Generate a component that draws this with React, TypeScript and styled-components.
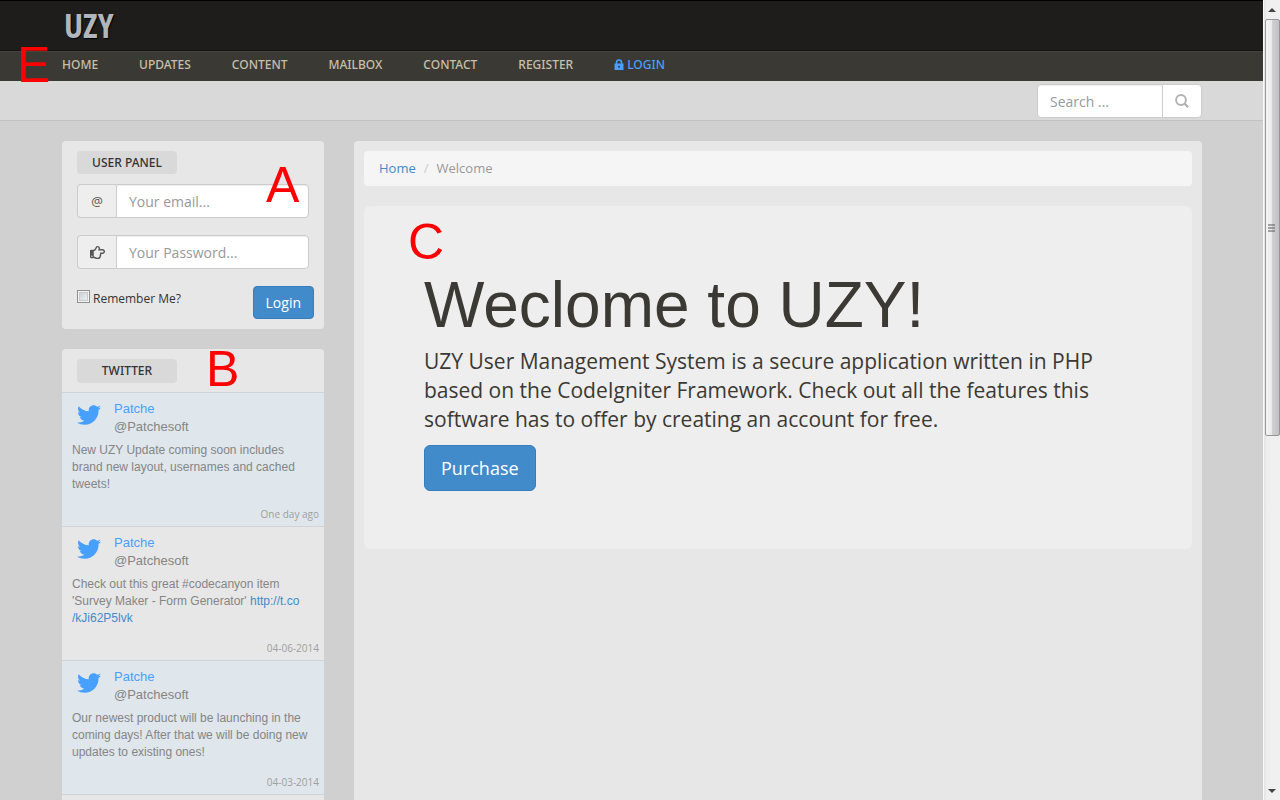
import React from 'react';
import styled, { createGlobalStyle } from 'styled-components';
import { FaRegHandPointRight, FaTwitter } from 'react-icons/fa';

const sans = `"Open Sans", "Noto Sans", sans-serif`;
const medium = `"Noto Sans", "Open Sans", sans-serif`;
const arial = `"Liberation Sans", Arial, sans-serif`;

const GlobalStyle = createGlobalStyle`
  *, *::before, *::after { box-sizing: border-box; }
  body {
    margin: 0;
    background: #d0d0d0;
    color: #333333;
    font-family: ${sans};
    font-size: 13px;
    line-height: 18px;
  }
  a { color: #428bca; text-decoration: none; }
  input, button { font-family: inherit; }
`;

const Window = styled.div`
  position: relative;
  display: flex;
  height: 100vh;
  overflow: hidden;
`;

const Page = styled.div`
  flex: 1;
  min-width: 0;
  height: 100%;
  display: flex;
  flex-direction: column;
`;

const Container = styled.div`
  width: 100%;
  max-width: 1140px;
  margin: 0 auto;
`;

const Header = styled.header`
  flex: none;
  height: 51px;
  background: #1e1d1b;
  border-top: 1px solid #000000;
  border-bottom: 1px solid #151412;
`;

const Logo = styled.a`
  display: inline-block;
  padding-left: 2px;
  color: #b0b6bc;
  font-family: "Open Sans Condensed", "Roboto Condensed", "Liberation Sans Narrow", "DejaVu Sans Condensed", sans-serif;
  font-size: 34px;
  font-weight: 300;
  line-height: 48px;
  text-shadow: 1px 1px 1px #000000;
`;

const NavBar = styled.nav`
  flex: none;
  height: 30px;
  background: #3b3933;
  border-top: 1px solid #45433c;
`;

const NavList = styled.ul`
  display: flex;
  gap: 41px;
  margin: 0;
  padding: 0;
  list-style: none;
`;

const NavLink = styled.a<{ $accent?: boolean }>`
  display: flex;
  align-items: center;
  gap: 3px;
  color: ${(p) => (p.$accent ? '#479fff' : '#c6c0ab')};
  font-family: ${medium};
  font-size: 12px;
  font-weight: 500;
  line-height: 26px;
`;

const SearchStrip = styled.div`
  flex: none;
  height: 40px;
  padding-top: 3px;
  background: #d9d9d9;
  border-bottom: 1px solid #c1c1c1;
`;

const SearchForm = styled.form`
  display: flex;
  width: 165px;
  margin-left: auto;
`;

const TextInput = styled.input`
  flex: 1;
  min-width: 0;
  height: 34px;
  padding: 6px 12px;
  background: #ffffff;
  border: 1px solid #cccccc;
  border-radius: 4px;
  box-shadow: inset 0 1px 1px rgba(0, 0, 0, 0.075);
  color: #555555;
  font-size: 14px;
  line-height: 20px;
  &::placeholder { color: #999999; opacity: 1; }
`;

const SearchInput = styled(TextInput)`
  border-radius: 4px 0 0 4px;
`;

const SearchButton = styled.button`
  display: flex;
  align-items: center;
  justify-content: center;
  width: 40px;
  height: 34px;
  margin-left: -1px;
  padding: 0;
  background: #ffffff;
  border: 1px solid #cccccc;
  border-radius: 0 4px 4px 0;
`;

const Columns = styled(Container)`
  flex: 1;
  min-height: 0;
  display: grid;
  grid-template-columns: minmax(0, 262fr) minmax(0, 848fr);
  gap: 30px;
  margin-top: 20px;
`;

const Sidebar = styled.aside`
  display: flex;
  flex-direction: column;
  gap: 20px;
`;

const Panel = styled.section`
  background: #e7e7e7;
  border-radius: 4px;
`;

const UserPanel = styled(Panel)`
  padding: 10px 15px;
`;

const TwitterPanel = styled(Panel)`
  padding-top: 10px;
`;

const PanelTitle = styled.h2<{ $inset?: boolean }>`
  width: 100px;
  margin: ${(p) => (p.$inset ? '0 0 9px 15px' : '0 0 10px')};
  background: #d9d9d9;
  border-radius: 4px;
  font-family: ${medium};
  font-size: 12px;
  font-weight: 500;
  line-height: ${(p) => (p.$inset ? '24px' : '23px')};
  text-align: center;
`;

const InputGroup = styled.label`
  display: flex;
  margin-bottom: 17px;
`;

const Addon = styled.span`
  display: flex;
  align-items: center;
  justify-content: center;
  width: 39px;
  background: #eeeeee;
  border: 1px solid #cccccc;
  border-right: 0;
  border-radius: 4px 0 0 4px;
  color: #555555;
`;

const GroupInput = styled(TextInput)`
  border-radius: 0 4px 4px 0;
`;

const FormFoot = styled.div`
  display: flex;
  align-items: flex-start;
  justify-content: space-between;
  margin-right: -5px;
`;

const Remember = styled.label`
  display: flex;
  align-items: flex-start;
  gap: 3px;
  padding-top: 4px;
  font-size: 12px;
  line-height: 17px;
`;

const CheckBox = styled.input`
  appearance: none;
  width: 13px;
  height: 13px;
  margin: 0;
  background: linear-gradient(135deg, #c5cbd2, #f6f6f6);
  border: 1px solid #8e8f8f;
  box-shadow: inset 0 0 0 1px #f4f4f4, inset 0 0 0 2px #c6cace;
`;

const PrimaryButton = styled.button<{ $large?: boolean }>`
  display: block;
  background: #428bca;
  border: 1px solid #357ebd;
  border-radius: ${(p) => (p.$large ? '6px' : '4px')};
  color: #ffffff;
  padding: ${(p) => (p.$large ? '10px 16px' : '6px 12px')};
  font-size: ${(p) => (p.$large ? '18px' : '14px')};
  line-height: ${(p) => (p.$large ? '24px' : '19px')};
`;

const Tweet = styled.article<{ $shaded?: boolean }>`
  height: 134px;
  display: flex;
  flex-direction: column;
  padding: 7px 5px 3px 10px;
  background: ${(p) => (p.$shaded ? '#dfe6ec' : 'transparent')};
  border-top: 1px solid #d0d4d7;
  color: #858585;
  font-family: ${arial};
`;

const TweetHead = styled.div`
  display: flex;
  gap: 13px;
  padding-left: 5px;
  font-size: 13px;
  line-height: 18px;
  svg { margin-top: 3px; }
`;

const Author = styled.div`
  display: flex;
  flex-direction: column;
`;

const AuthorLink = styled.a`
  color: #479fff;
`;

const TweetText = styled.p`
  margin: 6px 5px 0 0;
  font-size: 12px;
  line-height: 17px;
`;

const TweetDate = styled.time`
  margin-top: auto;
  color: #a0a0a0;
  font-family: ${sans};
  font-size: 10px;
  line-height: 18px;
  text-align: right;
`;

const Main = styled(Panel).attrs({ as: 'main' })`
  padding: 10px;
`;

const Breadcrumb = styled.ol`
  display: flex;
  margin: 0 0 20px;
  padding: 8px 15px;
  background: #f5f5f5;
  border-radius: 4px;
  color: #999999;
  line-height: 19px;
  list-style: none;
  li + li::before {
    content: '/';
    padding: 0 8px;
    color: #cccccc;
  }
`;

const Jumbotron = styled.section`
  padding: 68px 60px 58px;
  background: #eeeeee;
  border-radius: 6px;
  h1 {
    margin: 0 0 10px;
    color: #3b3933;
    font-family: ${arial};
    font-size: 64px;
    font-weight: 400;
    line-height: 63px;
  }
  p {
    max-width: 708px;
    margin: 0 0 11px;
    color: #3b3933;
    font-size: 21px;
    line-height: 29px;
  }
`;

const ScrollTrack = styled.div`
  flex: none;
  display: flex;
  flex-direction: column;
  justify-content: space-between;
  align-items: center;
  width: 16px;
  height: 100%;
  background: linear-gradient(90deg, #e3e3e3, #efefef 3px, #f0f0f0);
  box-shadow: -1px 0 0 #fafafa;
`;

const ScrollThumb = styled.div`
  display: flex;
  align-items: center;
  justify-content: center;
  width: 15px;
  height: 417px;
  margin-bottom: auto;
  background: linear-gradient(90deg, #f5f5f5, #e9e9eb 45%, #d0d0d4 50%, #c0c0c6);
  border: 1px solid #979797;
  border-radius: 2px;
`;

const ScrollEnd = styled.div`
  display: flex;
  align-items: center;
  justify-content: center;
  height: 19px;
`;

const Mark = styled.span<{ $x: number; $y: number }>`
  position: absolute;
  left: ${(p) => p.$x}px;
  top: ${(p) => p.$y}px;
  color: #ff0000;
  font-family: ${arial};
  font-size: 50px;
  line-height: 50px;
  pointer-events: none;
`;

const LockIcon = () => (
  <svg width="10" height="12" viewBox="0 0 10 12" aria-hidden="true">
    <path d="M2.500 5V3.300a2.500 2.300 0 0 1 5 0V5" fill="none" stroke="#479fff" strokeWidth="1.500" />
    <path fillRule="evenodd" fill="#479fff" d="M.5 4.500h9v6.500h-9zM4.300 6.800v2h1.500v-2z" />
  </svg>
);

const SearchIcon = () => (
  <svg width="14" height="14" viewBox="0 0 14 14" aria-hidden="true">
    <circle cx="6" cy="6" r="4.900" fill="none" stroke="#b3b3b3" strokeWidth="2" />
    <path d="M9.500 9.500l3.600 3.600" stroke="#b3b3b3" strokeWidth="2.200" />
  </svg>
);

const navItems = ['HOME', 'UPDATES', 'CONTENT', 'MAILBOX', 'CONTACT', 'REGISTER'];

const tweets: { text: React.ReactNode; date: string }[] = [
  { text: 'New UZY Update coming soon includes brand new layout, usernames and cached tweets!', date: 'One day ago' },
  {
    text: (
      <>
        Check out this great #codecanyon item 'Survey Maker - Form Generator'{' '}
        <a href="#survey">http://t.co<wbr />/kJi62P5lvk</a>
      </>
    ),
    date: '04-06-2014',
  },
  { text: 'Our newest product will be launching in the coming days! After that we will be doing new updates to existing ones!', date: '04-03-2014' },
];

const marks = [
  { label: 'E', x: 17, y: 40 },
  { label: 'A', x: 266, y: 160 },
  { label: 'B', x: 206, y: 344 },
  { label: 'C', x: 408, y: 217 },
];

export default function App() {
  return (
    <Window>
      <GlobalStyle />
      <Page>
        <Header>
          <Container>
            <Logo href="#home">UZY</Logo>
          </Container>
        </Header>
        <NavBar>
          <Container>
            <NavList>
              {navItems.map((item) => (
                <li key={item}>
                  <NavLink href={`#${item.toLowerCase()}`}>{item}</NavLink>
                </li>
              ))}
              <li>
                <NavLink href="#login" $accent>
                  <LockIcon />
                  LOGIN
                </NavLink>
              </li>
            </NavList>
          </Container>
        </NavBar>
        <SearchStrip>
          <Container>
            <SearchForm>
              <SearchInput type="text" placeholder="Search ..." aria-label="Search" />
              <SearchButton type="button" aria-label="Submit search">
                <SearchIcon />
              </SearchButton>
            </SearchForm>
          </Container>
        </SearchStrip>
        <Columns>
          <Sidebar>
            <UserPanel>
              <PanelTitle>USER PANEL</PanelTitle>
              <form>
                <InputGroup>
                  <Addon>@</Addon>
                  <GroupInput type="email" placeholder="Your email..." aria-label="Email" />
                </InputGroup>
                <InputGroup>
                  <Addon>
                    <FaRegHandPointRight size={15} />
                  </Addon>
                  <GroupInput type="password" placeholder="Your Password..." aria-label="Password" />
                </InputGroup>
                <FormFoot>
                  <Remember>
                    <CheckBox type="checkbox" />
                    Remember Me?
                  </Remember>
                  <PrimaryButton type="button">Login</PrimaryButton>
                </FormFoot>
              </form>
            </UserPanel>
            <TwitterPanel>
              <PanelTitle $inset>TWITTER</PanelTitle>
              {tweets.map((tweet, i) => (
                <Tweet key={tweet.date} $shaded={i % 2 === 0}>
                  <TweetHead>
                    <FaTwitter size={24} color="#479fff" />
                    <Author>
                      <AuthorLink href="#patche">Patche</AuthorLink>
                      <span>@Patchesoft</span>
                    </Author>
                  </TweetHead>
                  <TweetText>{tweet.text}</TweetText>
                  <TweetDate>{tweet.date}</TweetDate>
                </Tweet>
              ))}
              <Tweet />
            </TwitterPanel>
          </Sidebar>
          <Main>
            <Breadcrumb>
              <li><a href="#home">Home</a></li>
              <li>Welcome</li>
            </Breadcrumb>
            <Jumbotron>
              <h1>Weclome to UZY!</h1>
              <p>
                UZY User Management System is a secure application written in PHP based on the
                CodeIgniter Framework. Check out all the features this software has to offer by
                creating an account for free.
              </p>
              <PrimaryButton type="button" $large>Purchase</PrimaryButton>
            </Jumbotron>
          </Main>
        </Columns>
      </Page>
      <ScrollTrack aria-hidden="true">
        <ScrollEnd>
          <svg width="8" height="4"><path d="M0 4L4 0L8 4z" fill="#444444" /></svg>
        </ScrollEnd>
        <ScrollThumb>
          <svg width="8" height="8"><path d="M0 1h7M0 4h7M0 7h7" stroke="#555555" /></svg>
        </ScrollThumb>
        <ScrollEnd>
          <svg width="8" height="4"><path d="M0 0L4 4L8 0z" fill="#444444" /></svg>
        </ScrollEnd>
      </ScrollTrack>
      {marks.map((m) => (
        <Mark key={m.label} $x={m.x} $y={m.y}>{m.label}</Mark>
      ))}
    </Window>
  );
}
